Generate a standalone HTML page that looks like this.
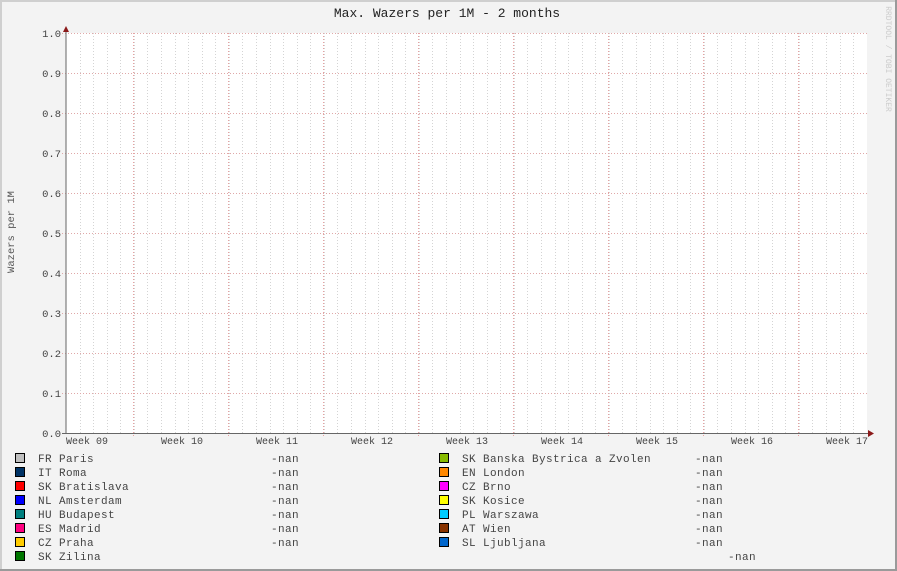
<!DOCTYPE html>
<html><head><meta charset="utf-8"><style>
html,body{margin:0;padding:0;background:#f3f3f3}
svg{display:block}
text{font-family:"Liberation Mono","DejaVu Sans Mono",monospace;fill:#444}
</style></head><body>
<svg width="897" height="571" xmlns="http://www.w3.org/2000/svg">
<rect x="0" y="0" width="897" height="571" fill="#f3f3f3"/>
<rect x="0" y="0" width="897" height="2" fill="#cfcfcf"/>
<rect x="0" y="0" width="2" height="571" fill="#cfcfcf"/>
<rect x="895" y="0" width="2" height="571" fill="#9a9a9a"/>
<rect x="0" y="569" width="897" height="2" fill="#9a9a9a"/>
<rect x="66" y="33" width="801" height="400" fill="#ffffff"/>
<g id="grid"></g>
<text x="447" y="17" text-anchor="middle" style="font-size:13px;fill:#222">Max. Wazers per 1M - 2 months</text>
<text transform="translate(14,232) rotate(-90)" text-anchor="middle" style="font-size:10.5px;fill:#555">Wazers per 1M</text>
<text transform="translate(886,59) rotate(90)" text-anchor="middle" style="font-size:8px;fill:#ccc">RRDTOOL / TOBI OETIKER</text>
<g id="yl" style="font-size:10.5px;fill:#666" text-anchor="end"></g>
<g id="xl" style="font-size:10px"></g>
<line x1="66" y1="28" x2="66" y2="434" stroke="#666" stroke-width="1"/>
<line x1="62" y1="433.5" x2="870" y2="433.5" stroke="#666" stroke-width="1"/>
<path d="M63 32 L66 26 L69 32 Z" fill="#8b1a1a"/>
<path d="M868 430 L874 433.5 L868 437 Z" fill="#8b1a1a"/>
<g id="leg" style="font-size:11px;letter-spacing:0.4px;fill:#555"></g>
</svg>
<script>
var ns="http://www.w3.org/2000/svg";
function el(t,a,p,txt){var e=document.createElementNS(ns,t);for(var k in a)e.setAttribute(k,a[k]);if(txt!=null)e.textContent=txt;document.getElementById(p).appendChild(e);return e;}
for(var i=1;i<60;i++){var x=Math.round(66+i*95/7)+0.5;if(x>867)break;el('line',{x1:x,y1:33,x2:x,y2:433,stroke:'#d4d4d4','stroke-dasharray':'1,2'},'grid');}
for(var x=133.5;x<867;x+=95){el('line',{x1:x,y1:33,x2:x,y2:437,stroke:'#e8a0a0','stroke-dasharray':'1,2'},'grid');}
for(var j=0;j<=10;j++){var y=33.5+j*40;el('line',{x1:62,y1:y,x2:867,y2:y,stroke:'#e0a8a8','stroke-dasharray':'1,2'},'grid');
el('text',{x:61,y:y+3.5},'yl',(1-j/10).toFixed(1));}
var wk=['09','10','11','12','13','14','15','16','17'];
for(var k=0;k<9;k++){el('text',{x:66+95*k,y:444},'xl','Week '+wk[k]);}
var L=[['#c0c0c0','FR Paris'],['#003366','IT Roma'],['#ff0000','SK Bratislava'],['#0000ff','NL Amsterdam'],['#008080','HU Budapest'],['#ff0080','ES Madrid'],['#ffcc00','CZ Praha'],['#007700','SK Zilina']];
var R=[['#88bb00','SK Banska Bystrica a Zvolen'],['#ff8800','EN London'],['#ff00ff','CZ Brno'],['#ffff00','SK Kosice'],['#00ccff','PL Warszawa'],['#883300','AT Wien'],['#0066cc','SL Ljubljana']];
L.forEach(function(d,i){var y=459+14*i;el('rect',{x:15.5,y:y-5.5,width:9,height:9,fill:d[0],stroke:'#000'},'leg');el('text',{x:38,y:y+3},'leg',d[1]);if(i<7)el('text',{x:271,y:y+3},'leg','-nan');});
R.forEach(function(d,i){var y=459+14*i;el('rect',{x:439.5,y:y-5.5,width:9,height:9,fill:d[0],stroke:'#000'},'leg');el('text',{x:462,y:y+3},'leg',d[1]);el('text',{x:695,y:y+3},'leg','-nan');});
el('text',{x:728,y:560},'leg','-nan');
</script>
</body></html>
